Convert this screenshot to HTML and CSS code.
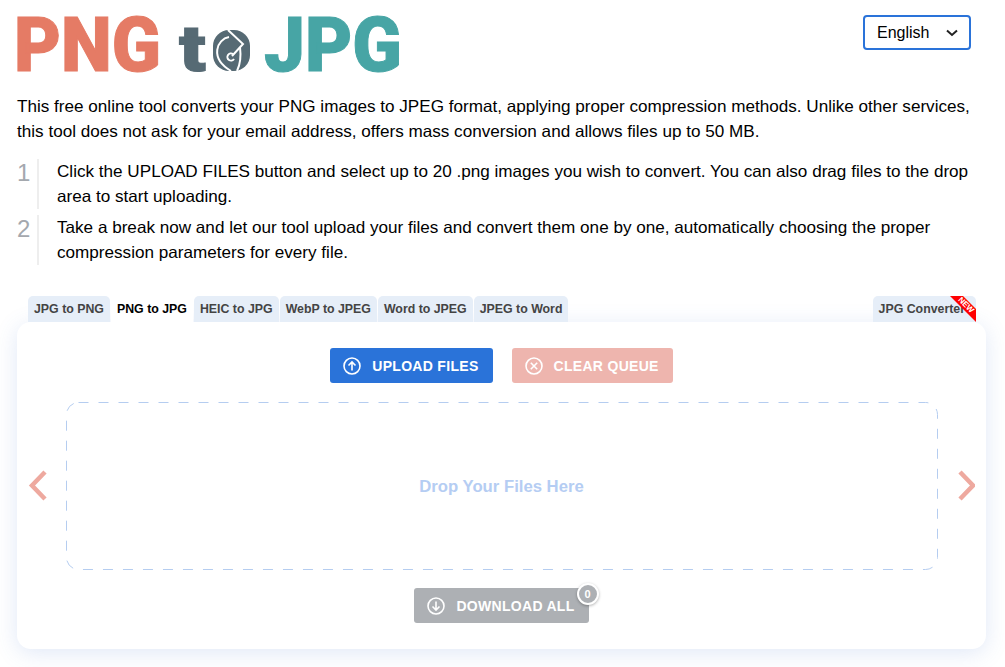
FILE: index.html

```html
<!DOCTYPE html>
<html lang="en">
<head>
  <meta charset="UTF-8">
  <title>PNG to JPG</title>
  <link rel="stylesheet" href="styles.css">
</head>
<body>
  <header class="top">
    <svg class="logo" width="420" height="94" viewBox="0 0 420 94">
      <text class="logo-big logo-red" x="14" y="71" textLength="147" lengthAdjust="spacingAndGlyphs">PNG</text>
      <text class="logo-small logo-slate" x="179" y="71" textLength="27" lengthAdjust="spacingAndGlyphs">t</text>
      <rect class="logo-o" x="213" y="30" width="37" height="41" rx="16"/>
      <path class="logo-swirl" d="M229 37 C217 39 209 58 231 71"/>
      <path class="logo-swirl" d="M228 30 L243 44 L232 56"/>
      <path class="logo-swirl" d="M233 54 A3.6 3.6 0 1 0 234 59"/>
      <path class="logo-swirl" d="M237 71 C241 63 241 55 240 47"/>
      <text class="logo-big logo-teal" x="264" y="71" textLength="138" lengthAdjust="spacingAndGlyphs">JPG</text>
    </svg>
    <div class="lang">
      <select class="lang-select">
        <option>English</option>
      </select>
      <svg class="lang-arrow" width="12" height="8" viewBox="0 0 12 8"><path d="M1 1.5 L6 6 L11 1.5"/></svg>
    </div>
  </header>

  <p class="intro">This free online tool converts your PNG images to JPEG format, applying proper compression methods. Unlike other services, this tool does not ask for your email address, offers mass conversion and allows files up to 50 MB.</p>

  <ol class="steps">
    <li class="step">
      <span class="step-num">1</span>
      <span class="step-text">Click the UPLOAD FILES button and select up to 20 .png images you wish to convert. You can also drag files to the drop area to start uploading.</span>
    </li>
    <li class="step">
      <span class="step-num">2</span>
      <span class="step-text">Take a break now and let our tool upload your files and convert them one by one, automatically choosing the proper compression parameters for every file.</span>
    </li>
  </ol>

  <nav class="tabs">
    <a class="tab">JPG to PNG</a>
    <a class="tab active">PNG to JPG</a>
    <a class="tab">HEIC to JPG</a>
    <a class="tab">WebP to JPEG</a>
    <a class="tab">Word to JPEG</a>
    <a class="tab">JPEG to Word</a>
    <a class="tab tab-new">JPG Converter
      <svg class="ribbon" width="27" height="27" viewBox="0 0 27 27">
        <polygon points="1,0 14,0 27,13 27,26"/>
        <text x="17" y="9" transform="rotate(45 17 9)">NEW</text>
      </svg>
    </a>
  </nav>

  <main class="card">
    <div class="actions">
      <button class="btn btn-upload">
        <svg class="btn-icon" width="20" height="20" viewBox="0 0 20 20"><circle cx="10" cy="10" r="8"/><path d="M10 14.5 V6 M6.5 9.5 L10 6 L13.5 9.5"/></svg>
        UPLOAD FILES
      </button>
      <button class="btn btn-clear">
        <svg class="btn-icon" width="20" height="20" viewBox="0 0 20 20"><circle cx="10" cy="10" r="8"/><path d="M6.8 6.8 L13.2 13.2 M13.2 6.8 L6.8 13.2"/></svg>
        CLEAR QUEUE
      </button>
    </div>

    <div class="stage">
      <svg class="nav-arrow" width="20" height="34" viewBox="0 0 20 34"><path d="M17 3 L4 16.5 L17 30"/></svg>
      <div class="drop">
        <svg class="drop-line" width="872" height="168" viewBox="0 0 872 168"><rect x="0.5" y="0.5" width="871" height="167" rx="12"/></svg>
        <span class="drop-text">Drop Your Files Here</span>
      </div>
      <svg class="nav-arrow" width="20" height="34" viewBox="0 0 20 34"><path d="M5 3 L18 16.5 L5 30"/></svg>
    </div>

    <div class="actions">
      <button class="btn btn-download">
        <svg class="btn-icon" width="20" height="20" viewBox="0 0 20 20"><circle cx="10" cy="10" r="8"/><path d="M10 5.5 V14 M6.5 10.5 L10 14 L13.5 10.5"/></svg>
        DOWNLOAD ALL
        <span class="badge">0</span>
      </button>
    </div>
  </main>
</body>
</html>
```

FILE: styles.css

```css
body {
  margin: 0;
  padding: 0 19px 18px 17px;
  font-family: "Liberation Sans", Arial, sans-serif;
  font-size: 17.13px;
  line-height: 25px;
  color: #000;
  background: #fff;
}
.top {
  display: flex;
  justify-content: space-between;
  align-items: flex-start;
  height: 94px;
}
.logo {
  display: block;
  margin-left: -17px;
}
.logo-big, .logo-small {
  font-family: Roboto, sans-serif;
  font-weight: 900;
  font-size: 76px;
  stroke-width: 1;
}
.logo-small {
  font-size: 64px;
}
.logo-red { fill: #e57b65; stroke: #e57b65; }
.logo-slate { fill: #566a74; stroke: #566a74; }
.logo-teal { fill: #47a5a5; stroke: #47a5a5; }
.logo-o { fill: #566a74; }
.logo-swirl {
  fill: none;
  stroke: #fff;
  stroke-width: 2;
}
.lang {
  position: relative;
  margin: 15px 15px 0 0;
}
.lang-select {
  appearance: none;
  display: block;
  width: 108px;
  height: 35px;
  padding: 0 0 0 12px;
  background: #fff;
  border: 2px solid #2a73d9;
  border-radius: 4px;
  font: 16px "Liberation Sans", Arial, sans-serif;
  color: #000;
}
.lang-arrow {
  position: absolute;
  top: 14px;
  right: 13px;
  fill: none;
  stroke: #222;
  stroke-width: 2;
}
.intro {
  margin: 0;
}
.steps {
  list-style: none;
  margin: 15px 0 0;
  padding: 0;
}
.step {
  display: flex;
  margin-bottom: 6px;
}
.step-num {
  width: 20px;
  font-size: 24px;
  line-height: 28px;
  color: #a4a8ae;
  border-right: 2px solid #eee;
  margin-right: 18px;
}
.step-text {
  flex: 1;
}
.tabs {
  display: flex;
  gap: 1px;
  margin: 31px 10px 0 11px;
}
.tab {
  position: relative;
  height: 26px;
  padding: 0 6px;
  font-size: 12.35px;
  font-weight: bold;
  line-height: 27px;
  color: #444;
  background: #e6eef8;
  border-radius: 5px 5px 0 0;
  white-space: nowrap;
  overflow: hidden;
}
.tab.active {
  color: #000;
  background: #fff;
}
.tab-new {
  margin-left: auto;
  padding-right: 11px;
}
.ribbon {
  position: absolute;
  top: 0;
  right: 0;
  fill: #f00;
}
.ribbon text {
  font: bold 8px "Liberation Sans", Arial, sans-serif;
  fill: #fff;
  text-anchor: middle;
  dominant-baseline: central;
}
.card {
  padding: 26px 0;
  background: #fff;
  border-radius: 14px;
  box-shadow: 0 4px 22px rgba(70, 120, 210, 0.17);
}
.actions {
  display: flex;
  justify-content: center;
  gap: 19px;
}
.btn {
  position: relative;
  display: flex;
  align-items: center;
  gap: 10px;
  height: 35px;
  padding: 0 14px 0 12px;
  border: 0;
  border-radius: 3px;
  font: bold 14px "Liberation Sans", Arial, sans-serif;
  letter-spacing: 0.3px;
  color: #fff;
}
.btn-upload { background: #2a73d9; }
.btn-clear { background: #eeb5ae; }
.btn-download { background: #adb0b4; }
.btn-icon {
  fill: none;
  stroke: #fff;
  stroke-width: 1.6;
}
.badge {
  position: absolute;
  top: -5px;
  right: -10px;
  width: 18px;
  height: 18px;
  border: 2px solid #fff;
  border-radius: 50%;
  background: #adb0b4;
  box-shadow: 0 1px 3px rgba(0, 0, 0, 0.3);
  font-size: 11px;
  line-height: 18px;
  text-align: center;
  letter-spacing: 0;
}
.stage {
  display: flex;
  align-items: center;
  justify-content: space-between;
  margin: 19px 0 18px;
  padding: 0 11px;
}
.nav-arrow {
  fill: none;
  stroke: #eea99f;
  stroke-width: 4.5;
}
.drop {
  position: relative;
  display: flex;
  align-items: center;
  justify-content: center;
  width: 872px;
  height: 168px;
}
.drop-line {
  position: absolute;
  inset: 0;
  fill: none;
  stroke: #b5cdf0;
  stroke-width: 1;
  stroke-dasharray: 10 10;
}
.drop-text {
  font-size: 16.7px;
  font-weight: bold;
  color: #b5cdf3;
}
```
